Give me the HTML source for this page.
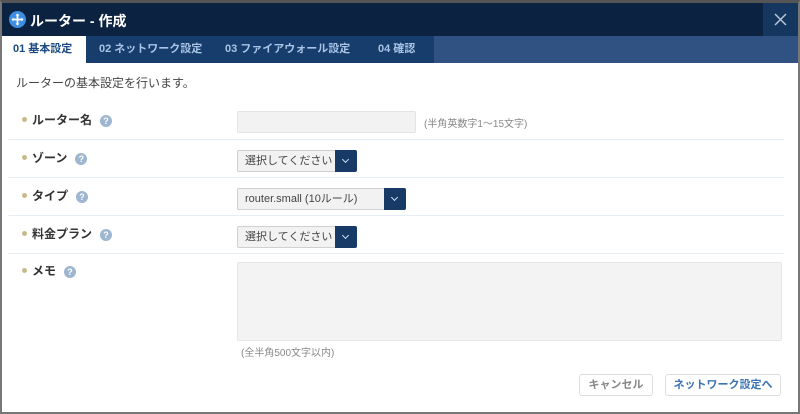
<!DOCTYPE html>
<html><head><meta charset="utf-8"><style>
*{box-sizing:border-box;margin:0;padding:0}
body{width:800px;height:414px;background:#fff;font-family:"Liberation Sans","Noto Sans CJK JP",sans-serif;position:relative;overflow:hidden;color:#333}
.frame{position:absolute;left:0;top:0;width:800px;height:414px;border-top:3px solid #555;border-left:2px solid #777;border-right:2px solid #777;border-bottom:2px solid #777}
.hdr{position:absolute;left:2px;top:3px;width:796px;height:33px;background:#0b2240}
.hdr .t{position:absolute;left:28px;top:8px;color:#fff;font-size:14px;font-weight:bold}
.close{position:absolute;right:0;top:0;width:35px;height:33px;background:#15375f}
.tabs{position:absolute;left:2px;top:36px;width:796px;height:27px;background:#2f5282}
.tabsin{position:absolute;left:0;top:0;width:432px;height:27px;background:#163d6b}
.tab{position:absolute;top:0;height:27px;line-height:26px;font-size:11px;font-weight:bold;color:#a9c4e6}
.tab.act{background:#fff;color:#1c4a80}
.a{position:absolute;font-size:12px}
.lbl{position:absolute;left:22px;font-size:12px;font-weight:bold;color:#333}
.lbl:before{content:"";display:inline-block;width:5px;height:5px;border-radius:50%;background:#c8b98a;margin-right:5px;vertical-align:middle;position:relative;top:-1px}
.q{display:inline-block;width:12px;height:12px;border-radius:50%;background:#9fb6d0;color:#fff;font-size:9px;text-align:center;line-height:12px;margin-left:8px;vertical-align:middle}
.sep{position:absolute;left:8px;width:776px;height:1px;background:#e6edf5}
.sel{position:absolute;left:237px;height:22px;border:1px solid #d0d0d0;background:#f2f2f2;border-radius:2px;font-size:11px;color:#444;padding-left:7px;line-height:20px}
.arr{position:absolute;right:-1px;top:-1px;width:22px;height:22px;background:#173a66;border-radius:0 2px 2px 0}
.arr:after{content:"";position:absolute;left:8px;top:7px;width:4px;height:4px;border-right:1.5px solid #cfe0f5;border-bottom:1.5px solid #cfe0f5;transform:rotate(45deg)}
.btn{position:absolute;top:374px;height:22px;border:1px solid #ddd;border-radius:3px;background:#fff;font-size:11px;text-align:center;line-height:20px}
</style></head><body>
<div class="frame"></div>
<div class="hdr">
<svg style="position:absolute;left:7px;top:8px" width="17" height="17" viewBox="0 0 17 17"><circle cx="8.5" cy="8.5" r="8.5" fill="#3d8ee0"/><path d="M8.5 3v11M3 8.5h11" stroke="#fff" stroke-width="1.8"/><path d="M8.5 2.5l-2 2h4zM8.5 14.5l-2-2h4zM2.5 8.5l2-2v4zM14.5 8.5l-2-2v4z" fill="#fff"/></svg>
<div class="t">ルーター - 作成</div>
<div class="close"><svg width="35" height="33"><path d="M12 11l11 11M23 11l-11 11" stroke="#b8c6d8" stroke-width="1.5"/></svg></div>
</div>
<div class="tabs"><div class="tabsin">
<div class="tab act" style="left:0;width:84px;padding-left:11px">01 基本設定</div>
<div class="tab" style="left:97px">02 ネットワーク設定</div>
<div class="tab" style="left:223px">03 ファイアウォール設定</div>
<div class="tab" style="left:376px">04 確認</div>
</div></div>
<div class="a" style="left:16px;top:74px;color:#444">ルーターの基本設定を行います。</div>
<div class="lbl" style="top:111px">ルーター名<span class="q">?</span></div>
<div style="position:absolute;left:237px;top:111px;width:179px;height:22px;background:#f2f2f2;border:1px solid #e4e4e4;border-radius:2px"></div>
<div class="a" style="left:424px;top:115px;font-size:10px;color:#888">(半角英数字1～15文字)</div>
<div class="sep" style="top:139px"></div>
<div class="lbl" style="top:149px">ゾーン<span class="q">?</span></div>
<div class="sel" style="top:150px;width:120px">選択してください<div class="arr"></div></div>
<div class="sep" style="top:177px"></div>
<div class="lbl" style="top:187px">タイプ<span class="q">?</span></div>
<div class="sel" style="top:188px;width:169px">router.small (10ルール)<div class="arr"></div></div>
<div class="sep" style="top:215px"></div>
<div class="lbl" style="top:225px">料金プラン<span class="q">?</span></div>
<div class="sel" style="top:226px;width:120px">選択してください<div class="arr"></div></div>
<div class="sep" style="top:253px"></div>
<div class="lbl" style="top:262px">メモ<span class="q">?</span></div>
<div style="position:absolute;left:237px;top:262px;width:545px;height:79px;background:#f3f3f3;border:1px solid #e6e6e6;border-radius:2px"></div>
<div class="a" style="left:241px;top:344px;font-size:10px;color:#888">(全半角500文字以内)</div>
<div class="btn" style="left:579px;width:74px;color:#888;font-weight:bold">キャンセル</div>
<div class="btn" style="left:665px;width:116px;color:#3c74b3;font-weight:bold">ネットワーク設定へ</div>
</body></html>
